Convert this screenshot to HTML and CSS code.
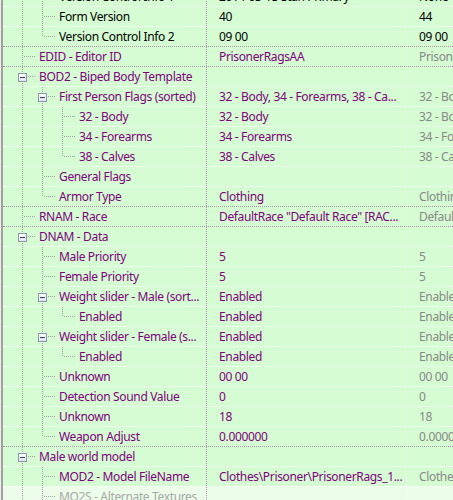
FILE: index.html
```html
<!DOCTYPE html>
<html lang="en">
  <head>
    <title>Record View</title>
    <link rel="stylesheet" href="styles.css">
  </head>

  <body>
    <div class="Tree">
      <!-- Record Header (children only, header row scrolled off) -->
      <div class="row plain">
        <div class="name"><span class="g pipe"></span><span class="g tee"></span><span class="label">Version Control Info 1</span></div>
        <div class="val">2014-03-13 Stan Primary</div>
        <div class="val">None</div>
      </div>
      <div class="row plain">
        <div class="name"><span class="g pipe"></span><span class="g tee"></span><span class="label">Form Version</span></div>
        <div class="val">40</div>
        <div class="val">44</div>
      </div>
      <div class="row plain">
        <div class="name"><span class="g pipe"></span><span class="g elbow"></span><span class="label">Version Control Info 2</span></div>
        <div class="val">09 00</div>
        <div class="val">09 00</div>
      </div>

      <!-- EDID -->
      <div class="row top">
        <div class="name"><span class="g tee"></span><span class="label">EDID - Editor ID</span></div>
        <div class="val">PrisonerRagsAA</div>
        <div class="val">PrisonerRagsAA</div>
      </div>

      <!-- BOD2 -->
      <div class="row top">
        <div class="name"><span class="g tee"><i class="tg"></i></span><span class="label">BOD2 - Biped Body Template</span></div>
        <div class="val"></div>
        <div class="val"></div>
      </div>
      <div class="row">
        <div class="name"><span class="g pipe"></span><span class="g tee"><i class="tg"></i></span><span class="label">First Person Flags (sorted)</span></div>
        <div class="val">32 - Body, 34 - Forearms, 38 - Ca...</div>
        <div class="val">32 - Body, 34 - Forearms</div>
      </div>
      <div class="row">
        <div class="name"><span class="g pipe"></span><span class="g pipe"></span><span class="g tee"></span><span class="label">32 - Body</span></div>
        <div class="val">32 - Body</div>
        <div class="val">32 - Body</div>
      </div>
      <div class="row">
        <div class="name"><span class="g pipe"></span><span class="g pipe"></span><span class="g tee"></span><span class="label">34 - Forearms</span></div>
        <div class="val">34 - Forearms</div>
        <div class="val">34 - Forearms</div>
      </div>
      <div class="row">
        <div class="name"><span class="g pipe"></span><span class="g pipe"></span><span class="g elbow"></span><span class="label">38 - Calves</span></div>
        <div class="val">38 - Calves</div>
        <div class="val">38 - Calves</div>
      </div>
      <div class="row">
        <div class="name"><span class="g pipe"></span><span class="g tee"></span><span class="label">General Flags</span></div>
        <div class="val"></div>
        <div class="val"></div>
      </div>
      <div class="row">
        <div class="name"><span class="g pipe"></span><span class="g elbow"></span><span class="label">Armor Type</span></div>
        <div class="val">Clothing</div>
        <div class="val">Clothing</div>
      </div>

      <!-- RNAM -->
      <div class="row top">
        <div class="name"><span class="g tee"></span><span class="label">RNAM - Race</span></div>
        <div class="val">DefaultRace "Default Race" [RAC...</div>
        <div class="val">DefaultRace "Default Race"</div>
      </div>

      <!-- DNAM -->
      <div class="row top">
        <div class="name"><span class="g tee"><i class="tg"></i></span><span class="label">DNAM - Data</span></div>
        <div class="val"></div>
        <div class="val"></div>
      </div>
      <div class="row">
        <div class="name"><span class="g pipe"></span><span class="g tee"></span><span class="label">Male Priority</span></div>
        <div class="val">5</div>
        <div class="val">5</div>
      </div>
      <div class="row">
        <div class="name"><span class="g pipe"></span><span class="g tee"></span><span class="label">Female Priority</span></div>
        <div class="val">5</div>
        <div class="val">5</div>
      </div>
      <div class="row">
        <div class="name"><span class="g pipe"></span><span class="g tee"><i class="tg"></i></span><span class="label">Weight slider - Male (sort...</span></div>
        <div class="val">Enabled</div>
        <div class="val">Enabled</div>
      </div>
      <div class="row">
        <div class="name"><span class="g pipe"></span><span class="g pipe"></span><span class="g elbow"></span><span class="label">Enabled</span></div>
        <div class="val">Enabled</div>
        <div class="val">Enabled</div>
      </div>
      <div class="row">
        <div class="name"><span class="g pipe"></span><span class="g tee"><i class="tg"></i></span><span class="label">Weight slider - Female (s...</span></div>
        <div class="val">Enabled</div>
        <div class="val">Enabled</div>
      </div>
      <div class="row">
        <div class="name"><span class="g pipe"></span><span class="g pipe"></span><span class="g elbow"></span><span class="label">Enabled</span></div>
        <div class="val">Enabled</div>
        <div class="val">Enabled</div>
      </div>
      <div class="row">
        <div class="name"><span class="g pipe"></span><span class="g tee"></span><span class="label">Unknown</span></div>
        <div class="val">00 00</div>
        <div class="val">00 00</div>
      </div>
      <div class="row">
        <div class="name"><span class="g pipe"></span><span class="g tee"></span><span class="label">Detection Sound Value</span></div>
        <div class="val">0</div>
        <div class="val">0</div>
      </div>
      <div class="row">
        <div class="name"><span class="g pipe"></span><span class="g tee"></span><span class="label">Unknown</span></div>
        <div class="val">18</div>
        <div class="val">18</div>
      </div>
      <div class="row">
        <div class="name"><span class="g pipe"></span><span class="g elbow"></span><span class="label">Weapon Adjust</span></div>
        <div class="val">0.000000</div>
        <div class="val">0.000000</div>
      </div>

      <!-- Male world model -->
      <div class="row top">
        <div class="name"><span class="g tee"><i class="tg"></i></span><span class="label">Male world model</span></div>
        <div class="val"></div>
        <div class="val"></div>
      </div>
      <div class="row">
        <div class="name"><span class="g pipe"></span><span class="g tee"></span><span class="label">MOD2 - Model FileName</span></div>
        <div class="val">Clothes\Prisoner\PrisonerRags_1...</div>
        <div class="val">Clothes\Prisoner\PrisonerRags_1</div>
      </div>
      <div class="row empty">
        <div class="name"><span class="g pipe"></span><span class="g tee"></span><span class="label">MO2S - Alternate Textures</span></div>
        <div class="val"></div>
        <div class="val"></div>
      </div>
    </div>
  </body>
</html>
```

FILE: styles.css
```css
body {
  margin: 0;
  background-color: #f0f0f0;
  font-family: "Noto Sans", sans-serif;
  font-size: 12px;
  letter-spacing: -0.35px;
  overflow: hidden;
}

.Tree {
  margin-top: -14px;
  margin-left: 1px;
  height: 540px;
  border-left: 2px solid #a0a0a0;
  background-color: #d5fcd2;
  color: #800080;
}

.row {
  display: flex;
  height: 20px;
  box-sizing: border-box;
  border-top: 1px dotted #ffffff;
  white-space: nowrap;
}

.row.top {
  border-top-color: #a696a6;
}

.row.plain {
  color: #000000;
}

.row.plain .val:last-child {
  color: #000000;
}

.row.empty {
  background-color: #ecfdea;
  color: #a8a8a8;
}

/* columns */
.name {
  flex: none;
  display: flex;
  width: 194px;
  padding-left: 9px;
  border-right: 1px dotted #a696a6;
  overflow: hidden;
}

.val {
  flex: none;
  width: 187px;
  padding-left: 12px;
  line-height: 19px;
  border-right: 1px dotted #ffffff;
  overflow: hidden;
}

.val:last-child {
  width: 300px;
  color: #888888;
  border-right: none;
}

.label {
  padding-left: 7px;
  line-height: 19px;
}

/* tree guides, dotted like the win32 tree */
.g {
  position: relative;
  flex: none;
  width: 20px;
  display: flex;
  align-items: center;
  justify-content: center;
}

.g.pipe::before,
.g.tee::before,
.g.elbow::before {
  content: "";
  position: absolute;
  left: 10px;
  top: 0;
  width: 1px;
  height: 100%;
  background: repeating-linear-gradient(#a0a0a0 0 1px, transparent 1px 2px);
}

.g.elbow::before {
  height: 10px;
}

.g.tee::after,
.g.elbow::after {
  content: "";
  position: absolute;
  left: 11px;
  top: 9px;
  width: 13px;
  height: 1px;
  background: repeating-linear-gradient(to right, transparent 0 1px, #a0a0a0 1px 2px);
}

.tg {
  position: relative;
  z-index: 1;
  box-sizing: border-box;
  width: 9px;
  height: 9px;
  margin-top: 1px;
  border: 1px solid #8c97ae;
  background: linear-gradient(#ffffff, #dfe3ea);
}

.tg::after {
  content: "";
  position: absolute;
  left: 1px;
  top: 3px;
  width: 5px;
  height: 1px;
  background-color: #2c3d6d;
}
```
